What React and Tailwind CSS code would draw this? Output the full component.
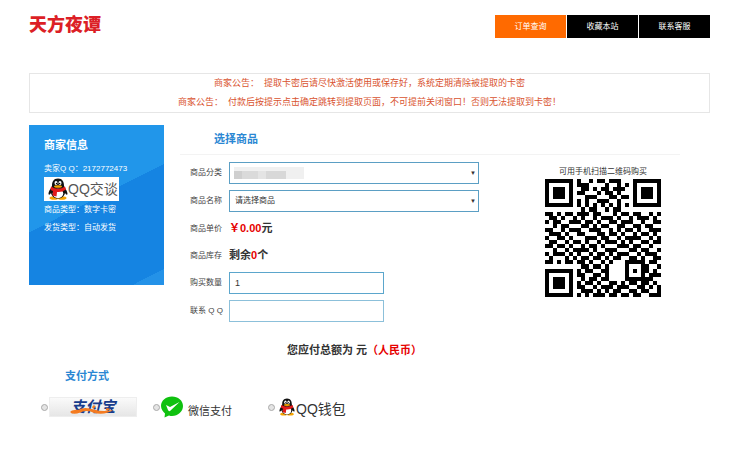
import { useState } from 'react'

const NAV = [
  { label: '订单查询', active: true },
  { label: '收藏本站' },
  { label: '联系客服' },
]

const QR_ROWS = [
  '00000000100101101110000000000',
  '00000000111000010010100000000',
  '00000000011010110111000000000',
  '00000000110001011010000000000',
  '00000000001110001101100000000',
  '00000000101001110010000000000',
  '00000000101010101010100000000',
  '00000000010110010110000000000',
  '11010110111011000101101100101',
  '01101001010010111010010111010',
  '10110011101101001101110010011',
  '00101100011010110011001101100',
  '11001011100111001010110100111',
  '01110100110001101101001011010',
  '10011010001110110010111100101',
  '01100101101001011101010011011',
  '11011010010110100011101100100',
  '00100101111010011100011011001',
  '10111010100101101011100101110',
  '01000101011011010110011010011',
  '11010110110100101000000010110',
  '00000000011011010000000101001',
  '00000000101100110000000111010',
  '00000000110011010000000010111',
  '00000000010110110000000101100',
  '00000000101101001101011011010',
  '00000000110010111011100110101',
  '00000000011101010110011011001',
  '00000000101011101101101100111',
]

const FINDERS = [[0, 0], [22, 0], [0, 22]]

function QrCode() {
  return (
    <svg viewBox="0 0 29 29" className="h-[118px] w-[116px]" preserveAspectRatio="none" shapeRendering="crispEdges" role="img" aria-label="二维码">
      {QR_ROWS.map((row, y) =>
        row.split('').map((bit, x) => bit === '1' && <rect key={`${x}-${y}`} x={x} y={y} width="1" height="1" />)
      )}
      {FINDERS.map(([x, y]) => (
        <g key={`${x}-${y}`}>
          <rect x={x} y={y} width="7" height="7" />
          <rect x={x + 1} y={y + 1} width="5" height="5" fill="#fff" />
          <rect x={x + 2} y={y + 2} width="3" height="3" />
        </g>
      ))}
      <rect x="20" y="20" width="5" height="5" />
      <rect x="21" y="21" width="3" height="3" fill="#fff" />
      <rect x="22" y="22" width="1" height="1" />
    </svg>
  )
}

function Penguin({ className }) {
  return (
    <svg viewBox="0 0 40 44" className={className} aria-hidden="true">
      <ellipse cx="12" cy="40" rx="9" ry="3.5" fill="#f5a400" />
      <ellipse cx="28" cy="40" rx="9" ry="3.5" fill="#f5a400" />
      <path d="M20 1C11 1 8 8 8 15C8 19 1 25 1 32C2 35 5 32 6 30C8 38 14 41 20 41S32 38 34 30C35 32 38 35 39 32C39 25 32 19 32 15C32 8 29 1 20 1Z" fill="#111" />
      <ellipse cx="20" cy="31" rx="10.5" ry="9.5" fill="#fff" />
      <ellipse cx="16" cy="10" rx="3" ry="4" fill="#fff" />
      <ellipse cx="24" cy="10" rx="3" ry="4" fill="#fff" />
      <circle cx="17" cy="11" r="1.4" />
      <circle cx="23.3" cy="11" r="1.4" />
      <ellipse cx="20" cy="17" rx="8" ry="2.6" fill="#f5a400" />
      <path d="M6 17Q20 26 34 17L36 23Q28 29 18 28L17 37L9 35L10 26Q7 25 5 23Z" fill="#e21b1b" />
    </svg>
  )
}

function WechatIcon() {
  return (
    <svg viewBox="0 0 44 44" className="h-[22px] w-[22px]" aria-hidden="true">
      <path d="M22 1C10 1 0 9 0 20C0 26 4 31 8 35L7 43L16 39C18 40 20 40 22 40C34 40 44 31 44 20S34 1 22 1Z" fill="#0fc10f" />
      <path d="M10 18L18 22L37 12L18 30Q15 31 14 28Z" fill="#fff" />
    </svg>
  )
}

function AlipayLogo() {
  return (
    <span className="relative flex h-5 w-[88px] items-center justify-center border border-[#eeeeee] bg-linear-to-b from-[#fafafa] to-[#e6e6e6]">
      <span className="text-[15px] leading-5 font-bold text-[#173c8c] italic">支付宝</span>
      <svg viewBox="0 0 88 20" className="absolute inset-0 h-full w-full" aria-hidden="true">
        <path d="M28 13Q18 13 19 16Q22 19 30 16Q37 13 44 16Q56 20 67 13Q56 16 46 13Q34 9 28 13Z" fill="#f47b20" />
        <path d="M44 8L47 9L45 12L43 11ZM59 11L63 12L61 14L58 14Z" fill="#f47b20" />
      </svg>
    </span>
  )
}

function Field({ id, label, children }) {
  return (
    <div className="flex items-center">
      <label htmlFor={id} className="w-[39px] shrink-0 whitespace-nowrap text-[8px] leading-3 text-[#444]">{label}</label>
      {children}
    </div>
  )
}

function SelectBox({ id, children, masked }) {
  return (
    <div className="relative w-[250px]">
      <select id={id} className="block h-[22px] w-full appearance-none border border-[#5b9fc4] bg-white pr-4 pl-[5px] text-[8px] text-[#333]">
        {children}
      </select>
      {masked && (
        <span className="absolute top-[5px] left-[5px] flex h-3 w-[70px] items-end bg-[#f0f0f0]">
          <span className="h-2 w-2 bg-[#cfcfcf]" />
          <span className="h-2 w-4 bg-[#dadada]" />
          <span className="h-2 w-2 bg-[#e4e4e4]" />
          <span className="h-2 w-5 bg-[#d8d8d8]" />
        </span>
      )}
      <span className="pointer-events-none absolute top-0 right-[3px] text-[6px] leading-[22px] text-[#333]">▼</span>
    </div>
  )
}

function PayOption({ value, checked, onChange, label, children }) {
  return (
    <label className="flex items-center gap-px">
      <input
        type="radio"
        name="pay"
        value={value}
        checked={checked}
        onChange={onChange}
        aria-label={label}
        className="h-[7px] w-[7px] shrink-0 appearance-none rounded-full border border-[#aaa] bg-[#e4e4e4] checked:bg-[#555]"
      />
      {children}
    </label>
  )
}

export default function App() {
  const [pay, setPay] = useState('')
  const [qty, setQty] = useState('1')

  return (
    <div className="bg-white px-[29px] pb-8 font-['Liberation_Sans','Noto_Sans_CJK_SC',sans-serif] text-[#333]">
      <header className="flex items-start justify-between pt-[7px]">
        <h1 className="text-[18px] leading-9 font-black whitespace-nowrap text-[#dc1f26]">天方夜谭</h1>
        <nav className="mt-2 flex gap-px">
          {NAV.map((item) => (
            <a
              key={item.label}
              href="#"
              className={`flex h-[23px] w-[71px] items-center justify-center text-[8px] text-white ${item.active ? 'bg-[#ff6a00]' : 'bg-black'}`}
            >
              {item.label}
            </a>
          ))}
        </nav>
      </header>

      <section className="mt-[30px] border border-[#e6e6e6] text-center text-[9px] leading-[19px] text-[#d9532f]">
        <p>商家公告：&nbsp; 提取卡密后请尽快激活使用或保存好，系统定期清除被提取的卡密</p>
        <p>商家公告：&nbsp; 付款后按提示点击确定跳转到提取页面，不可提前关闭窗口！否则无法提取到卡密！</p>
      </section>

      <main className="mt-3 flex items-start">
        <aside className="h-40 w-[135px] shrink-0 bg-[linear-gradient(153deg,#2196ea_0%,#2196ea_47%,#1584e2_47%,#1584e2_93%,#2492e8_93%)] px-[15px] pt-3 text-[8px] text-white">
          <h2 className="text-[11px] leading-4 font-bold">商家信息</h2>
          <p className="mt-2 leading-4 whitespace-nowrap">卖家Q Q：2172772473</p>
          <a href="#" className="flex h-6 w-[75px] items-center bg-white pl-1 text-[14px] whitespace-nowrap text-[#555]">
            <Penguin className="h-[22px] w-5 shrink-0" />
            QQ交谈
          </a>
          <p className="leading-[18px]">商品类型：数字卡密</p>
          <p className="leading-[18px]">发货类型：自动发货</p>
        </aside>

        <div className="ml-4 min-w-0 flex-1 pr-[30px]">
          <h2 className="border-b border-[#f3f3f3] pt-[6px] pb-[7px] pl-[34px] text-[11px] leading-4 font-bold text-[#2a87d3]">选择商品</h2>
          <div className="flex justify-between pt-[7px] pl-[10px]">
            <form className="flex flex-col gap-[6px]">
              <Field id="category" label="商品分类">
                <SelectBox id="category" masked>
                  <option value="" />
                </SelectBox>
              </Field>
              <Field id="product" label="商品名称">
                <SelectBox id="product">
                  <option value="">请选择商品</option>
                </SelectBox>
              </Field>
              <Field id="price" label="商品单价">
                <output id="price" className="text-[11px] leading-[21px] font-bold"><span className="text-[#e60000]">￥0.00</span>元</output>
              </Field>
              <Field id="stock" label="商品库存">
                <output id="stock" className="text-[11px] leading-[21px] font-bold">剩余<span className="text-[#e60000]">0</span>个</output>
              </Field>
              <Field id="qty" label="购买数量">
                <input id="qty" value={qty} onChange={(e) => setQty(e.target.value)} className="h-[22px] w-[155px] border border-[#5ba6cc] px-[5px] text-[9px]" />
              </Field>
              <Field id="contact" label="联系 Q Q">
                <input id="contact" className="h-[22px] w-[155px] border border-[#8cc0da] px-[5px] text-[9px]" />
              </Field>
            </form>
            <div className="flex shrink-0 flex-col items-center pt-[3px] pr-[19px]">
              <p className="text-[8px] leading-[14px]">可用手机扫描二维码购买</p>
              <QrCode />
            </div>
          </div>
        </div>
      </main>

      <p className="mt-5 pl-[258px] text-[11px] leading-4 font-bold">
        您应付总额为 元<span className="text-[#e60000]">（人民币）</span>
      </p>

      <section>
        <h2 className="mt-[10px] pl-9 text-[11px] leading-4 font-bold text-[#2a87d3]">支付方式</h2>
        <div className="mt-[11px] flex h-6 items-center pl-3">
          <PayOption value="alipay" label="支付宝" checked={pay === 'alipay'} onChange={() => setPay('alipay')}>
            <AlipayLogo />
          </PayOption>
          <div className="mr-9 ml-4">
            <PayOption value="wechat" label="微信支付" checked={pay === 'wechat'} onChange={() => setPay('wechat')}>
              <WechatIcon />
              <span className="ml-1 pt-2 text-[11px] leading-4">微信支付</span>
            </PayOption>
          </div>
          <PayOption value="qq" label="QQ钱包" checked={pay === 'qq'} onChange={() => setPay('qq')}>
            <Penguin className="ml-[3px] h-[18px] w-4" />
            <span className="pt-1 text-[14px] leading-4">QQ钱包</span>
          </PayOption>
        </div>
      </section>
    </div>
  )
}
